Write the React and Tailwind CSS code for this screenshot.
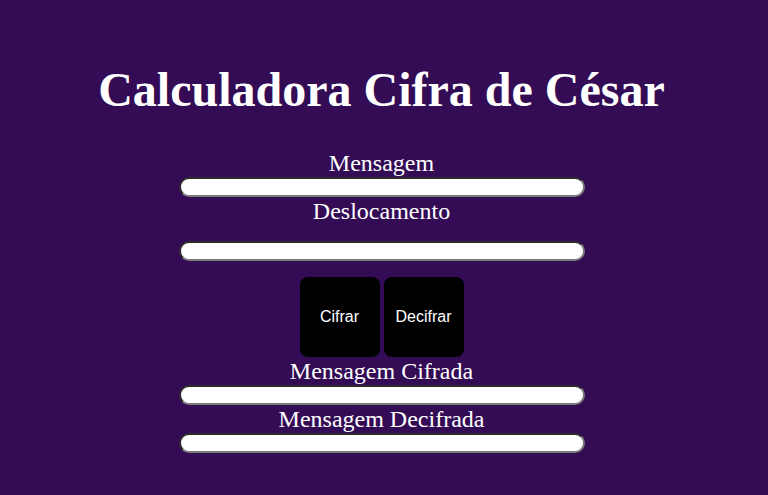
import React from "react";

const Campo = ({ className = "" }) => (
  <input
    type="text"
    className={`block w-[406px] h-5 rounded-full bg-white border-2 border-t-[#2b2b2b] border-l-[#2b2b2b] border-b-[#7a7a7a] border-r-[#7a7a7a] outline-none px-2 ${className}`}
  />
);

const Rotulo = ({ children, className = "" }) => (
  <label className={`block text-[24px] leading-[28px] text-white ${className}`}>{children}</label>
);

export default function App() {
  return (
    <div
      className="min-h-screen w-full bg-[#330c55] flex flex-col items-center pr-[5px]"
      style={{ fontFamily: '"Liberation Serif", "Times New Roman", serif' }}
    >
      <h1 className="mt-[62px] text-[48px] leading-[55px] font-bold text-white">
        Calculadora Cifra de César
      </h1>

      <Rotulo className="mt-[32px]">Mensagem</Rotulo>
      <Campo />

      <Rotulo>Deslocamento</Rotulo>
      <Campo className="mt-[16px]" />

      <div className="mt-[16px] flex gap-1">
        <button
          className="w-20 h-20 rounded-lg bg-black text-white text-base"
          style={{ fontFamily: '"Liberation Sans", Arial, sans-serif' }}
        >
          Cifrar
        </button>
        <button
          className="w-20 h-20 rounded-lg bg-black text-white text-base"
          style={{ fontFamily: '"Liberation Sans", Arial, sans-serif' }}
        >
          Decifrar
        </button>
      </div>

      <Rotulo>Mensagem Cifrada</Rotulo>
      <Campo />

      <Rotulo>Mensagem Decifrada</Rotulo>
      <Campo />
    </div>
  );
}
